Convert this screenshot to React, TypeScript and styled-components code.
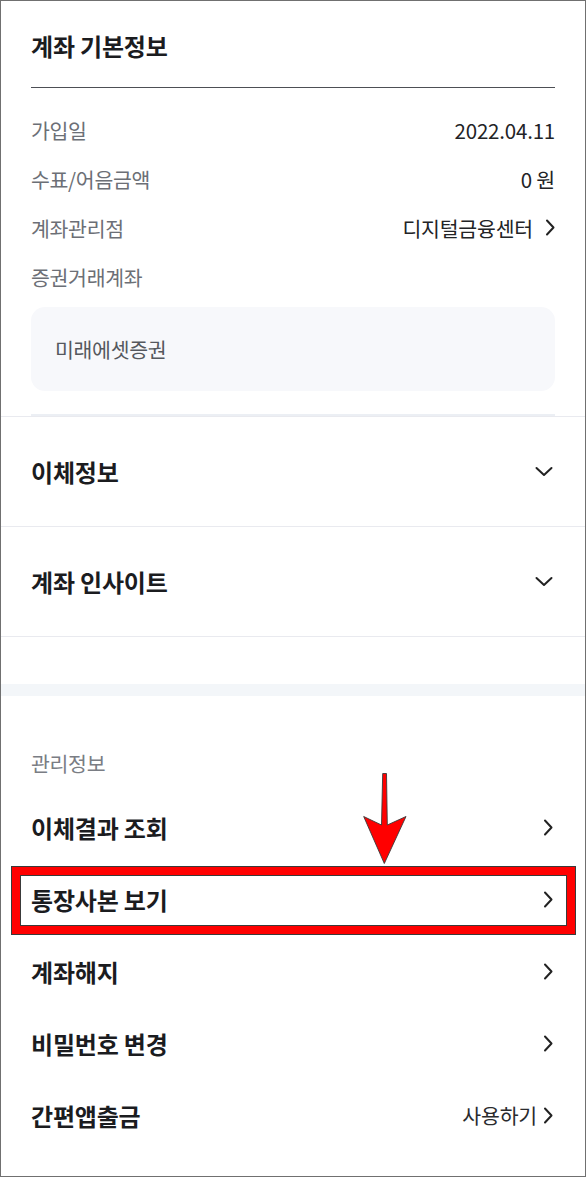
import React from "react";
import styled, { createGlobalStyle } from "styled-components";

const GlobalStyle = createGlobalStyle`
  html, body { margin: 0; padding: 0; background: #fff; }
  body { font-family: "Noto Sans CJK KR", "Noto Sans", sans-serif; -webkit-font-smoothing: antialiased; }
  * { box-sizing: border-box; }
`;

const Frame = styled.div`
  position: relative;
  width: 586px;
  height: 1177px;
  border: 1px solid #707070;
  background: #fff;
  overflow: hidden;
`;

const BasicSection = styled.section`
  padding: 0 30px;
`;

const Header = styled.div`
  padding: 30px 0 26px;
  border-bottom: 1px solid #4d4f55;
`;

const Title = styled.h2`
  margin: 0;
  font-size: 24px;
  line-height: 30px;
  font-weight: 700;
  color: #1b1c1f;
  letter-spacing: -0.2px;
`;

const InfoList = styled.div`
  padding-top: 17px;
`;

const InfoRow = styled.div`
  display: flex;
  align-items: center;
  justify-content: space-between;
  height: 49px;
  font-size: 20.5px;
`;

const Label = styled.span`
  color: #6c6f76;
  letter-spacing: -0.3px;
`;

const Value = styled.span`
  display: flex;
  align-items: center;
  gap: 12px;
  color: #222326;
  letter-spacing: -0.2px;
`;

const AccountBox = styled.div`
  margin-top: 6px;
  height: 84px;
  padding-left: 24px;
  display: flex;
  align-items: center;
  border-radius: 14px;
  background: #f7f8fb;
  font-size: 20.5px;
  color: #55585e;
  letter-spacing: -0.3px;
`;

const InnerRule = styled.div`
  margin-top: 23px;
  height: 2px;
  background: #eceff4;
`;

const AccordionRow = styled.div`
  display: flex;
  align-items: center;
  justify-content: space-between;
  height: 110px;
  padding: 0 32px 0 30px;
  border-top: 1px solid #e9eaef;
`;

const RowTitle = styled.span`
  font-size: 24px;
  font-weight: 700;
  color: #1b1c1f;
  letter-spacing: -0.2px;
`;

const Spacer = styled.div`
  height: 48px;
  border-top: 1px solid #e9eaef;
`;

const Band = styled.div`
  height: 12px;
  background: #f3f6f9;
`;

const ManageSection = styled.section`
  padding: 53px 0 0;
`;

const SectionLabel = styled.div`
  padding: 0 30px;
  font-size: 20.5px;
  line-height: 28px;
  color: #7a7d84;
  letter-spacing: -0.3px;
  margin-bottom: 14px;
`;

const MenuRow = styled.div`
  display: flex;
  align-items: center;
  justify-content: space-between;
  height: 72px;
  padding: 0 32px 0 30px;
`;

const MenuValue = styled.span`
  display: flex;
  align-items: center;
  gap: 6px;
  font-size: 20.5px;
  color: #2a2b2e;
  letter-spacing: -0.2px;
`;

const Highlight = styled.div`
  position: absolute;
  left: 11px;
  top: 866px;
  width: 563px;
  height: 67px;
  border: 8px solid #ff0000;
  box-shadow: 0 0 0 1px #3a3a3a, inset 0 0 0 1px #3a3a3a;
  pointer-events: none;
`;

const ArrowSvg = styled.svg`
  position: absolute;
  left: 359px;
  top: 769px;
  width: 48px;
  height: 96px;
  pointer-events: none;
`;

const ChevronRight = () => (
  <svg width="10" height="17" viewBox="0 0 10 17" fill="none">
    <path d="M2 1.5 L8.5 8.5 L2 15.5" stroke="#222" strokeWidth="2" strokeLinecap="round" strokeLinejoin="round" />
  </svg>
);

const ChevronDown = () => (
  <svg width="18" height="11" viewBox="0 0 18 11" fill="none">
    <path d="M1.5 2 L9 9 L16.5 2" stroke="#222" strokeWidth="2" strokeLinecap="round" strokeLinejoin="round" />
  </svg>
);

const info = [
  { label: "가입일", value: "2022.04.11" },
  { label: "수표/어음금액", value: "0 원" },
  { label: "계좌관리점", value: "디지털금융센터", link: true },
  { label: "증권거래계좌" },
];

const menus = [
  { title: "이체결과 조회" },
  { title: "통장사본 보기" },
  { title: "계좌해지" },
  { title: "비밀번호 변경" },
  { title: "간편앱출금", value: "사용하기" },
];

export default function App() {
  return (
    <>
      <GlobalStyle />
      <Frame>
        <BasicSection>
          <Header>
            <Title>계좌 기본정보</Title>
          </Header>
          <InfoList>
            {info.map((r) => (
              <InfoRow key={r.label}>
                <Label>{r.label}</Label>
                {r.value && (
                  <Value>
                    {r.value}
                    {r.link && <ChevronRight />}
                  </Value>
                )}
              </InfoRow>
            ))}
          </InfoList>
          <AccountBox>미래에셋증권</AccountBox>
          <InnerRule />
        </BasicSection>
        <AccordionRow>
          <RowTitle>이체정보</RowTitle>
          <ChevronDown />
        </AccordionRow>
        <AccordionRow>
          <RowTitle>계좌 인사이트</RowTitle>
          <ChevronDown />
        </AccordionRow>
        <Spacer />
        <Band />
        <ManageSection>
          <SectionLabel>관리정보</SectionLabel>
          {menus.map((m) => (
            <MenuRow key={m.title}>
              <RowTitle>{m.title}</RowTitle>
              <MenuValue>
                {m.value}
                <ChevronRight />
              </MenuValue>
            </MenuRow>
          ))}
        </ManageSection>
        <Highlight />
        <ArrowSvg viewBox="0 0 48 96">
          <path
            d="M22.7 3.5 L26.5 3.5 L27.3 55 L46 46.5 L24.3 93.5 L3.7 46.5 L21.5 55 Z"
            fill="#ff0000"
            stroke="#3a3a3a"
            strokeWidth="0.9"
            strokeLinejoin="miter"
          />
        </ArrowSvg>
      </Frame>
    </>
  );
}
